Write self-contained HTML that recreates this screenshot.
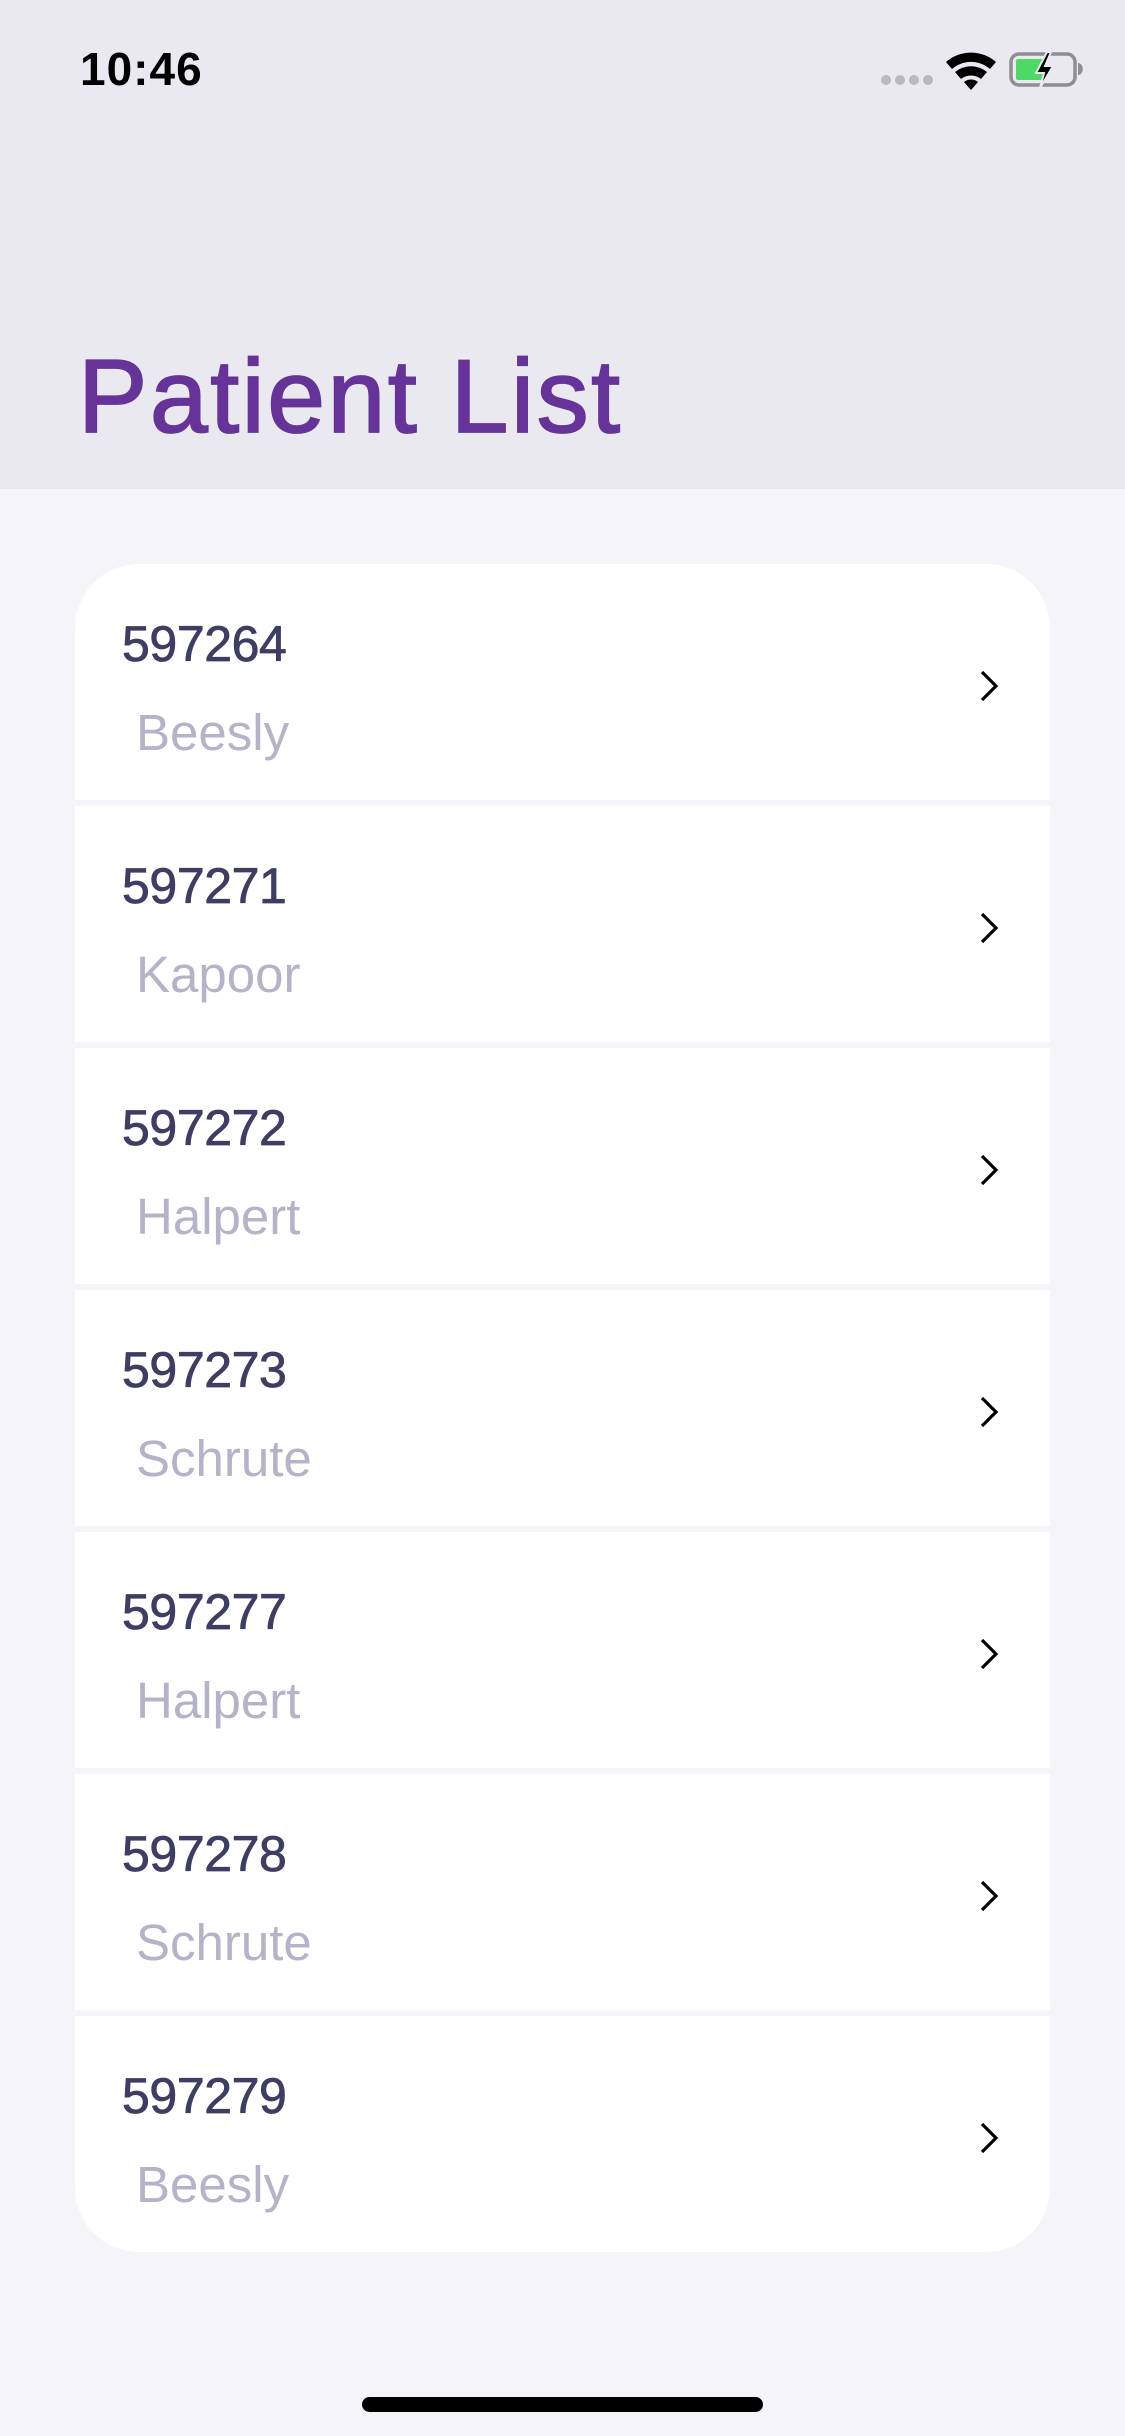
<!DOCTYPE html>
<html><head><meta charset="utf-8"><style>
*{margin:0;padding:0;box-sizing:border-box}
body{width:1125px;height:2436px;background:#f4f4f9;font-family:"Liberation Sans",sans-serif;position:relative;overflow:hidden}
.hdr{position:absolute;left:0;top:0;width:1125px;height:489px;background:#e9e9ef}
.time{position:absolute;left:80px;top:44px;font-size:46px;font-weight:bold;color:#000;line-height:50px;letter-spacing:1px}
.title{position:absolute;left:78px;top:337px;font-size:104px;line-height:120px;color:#663399;-webkit-text-stroke:1.8px #663399;letter-spacing:2.5px}
.card{position:absolute;left:75px;top:564px;width:975px;height:1688px;border-radius:64px;overflow:hidden;background:#f4f4f9}
.row{position:absolute;left:0;width:975px;height:236px;background:#fff}
.id{position:absolute;left:47px;top:50px;font-size:50px;line-height:60px;color:#3e3d63;-webkit-text-stroke:0.8px #3e3d63;letter-spacing:-0.4px}
.nm{position:absolute;left:61px;top:139px;font-size:51px;line-height:60px;color:#b4b3c8}
.chev{position:absolute;left:899px;top:101px}
.bar{position:absolute;left:362px;top:2397px;width:401px;height:15px;border-radius:8px;background:#000}
</style></head><body>
<div class="hdr"></div>
<div class="time">10:46</div>
<svg style="position:absolute;left:875px;top:45px" width="215" height="50" viewBox="875 45 215 50">
<g fill="#b9b9bf"><circle cx="886" cy="80" r="5"/><circle cx="900" cy="80" r="5"/><circle cx="914" cy="80" r="5"/><circle cx="928" cy="80" r="5"/></g>
<g fill="#000"><path d="M946 62 A38 38 0 0 1 996 62 L990 69 A29 29 0 0 0 952 69Z"/><path d="M955 72 A25 25 0 0 1 987 72 L981 79 A16 16 0 0 0 961 79Z"/><path d="M964 82 A11 11 0 0 1 978 82 L971 90Z"/></g>
<rect x="1011" y="54" width="64" height="31" rx="8" fill="none" stroke="#8e8e93" stroke-width="3.5"/>
<rect x="1016" y="59" width="27" height="21" rx="2" fill="#4cd964"/>
<path d="M1078 63 a4 5 0 0 1 0 12z" fill="#8e8e93"/>
<path d="M1047 52 L1036 73 L1044 73 L1040 88 L1053 66 L1045 66 L1051 52Z" fill="#000" stroke="#e9e9ef" stroke-width="2"/>
</svg>
<div class="title">Patient List</div>
<div class="card">
<div class="row" style="top:0"><div class="id">597264</div><div class="nm">Beesly</div><svg class="chev" width="30" height="40"><path d="M8 7 L22 21 L8 35" fill="none" stroke="#000" stroke-width="3.2"/></svg></div>
<div class="row" style="top:242px"><div class="id">597271</div><div class="nm">Kapoor</div><svg class="chev" width="30" height="40"><path d="M8 7 L22 21 L8 35" fill="none" stroke="#000" stroke-width="3.2"/></svg></div>
<div class="row" style="top:484px"><div class="id">597272</div><div class="nm">Halpert</div><svg class="chev" width="30" height="40"><path d="M8 7 L22 21 L8 35" fill="none" stroke="#000" stroke-width="3.2"/></svg></div>
<div class="row" style="top:726px"><div class="id">597273</div><div class="nm">Schrute</div><svg class="chev" width="30" height="40"><path d="M8 7 L22 21 L8 35" fill="none" stroke="#000" stroke-width="3.2"/></svg></div>
<div class="row" style="top:968px"><div class="id">597277</div><div class="nm">Halpert</div><svg class="chev" width="30" height="40"><path d="M8 7 L22 21 L8 35" fill="none" stroke="#000" stroke-width="3.2"/></svg></div>
<div class="row" style="top:1210px"><div class="id">597278</div><div class="nm">Schrute</div><svg class="chev" width="30" height="40"><path d="M8 7 L22 21 L8 35" fill="none" stroke="#000" stroke-width="3.2"/></svg></div>
<div class="row" style="top:1452px"><div class="id">597279</div><div class="nm">Beesly</div><svg class="chev" width="30" height="40"><path d="M8 7 L22 21 L8 35" fill="none" stroke="#000" stroke-width="3.2"/></svg></div>
</div>
<div class="bar"></div>
</body></html>
